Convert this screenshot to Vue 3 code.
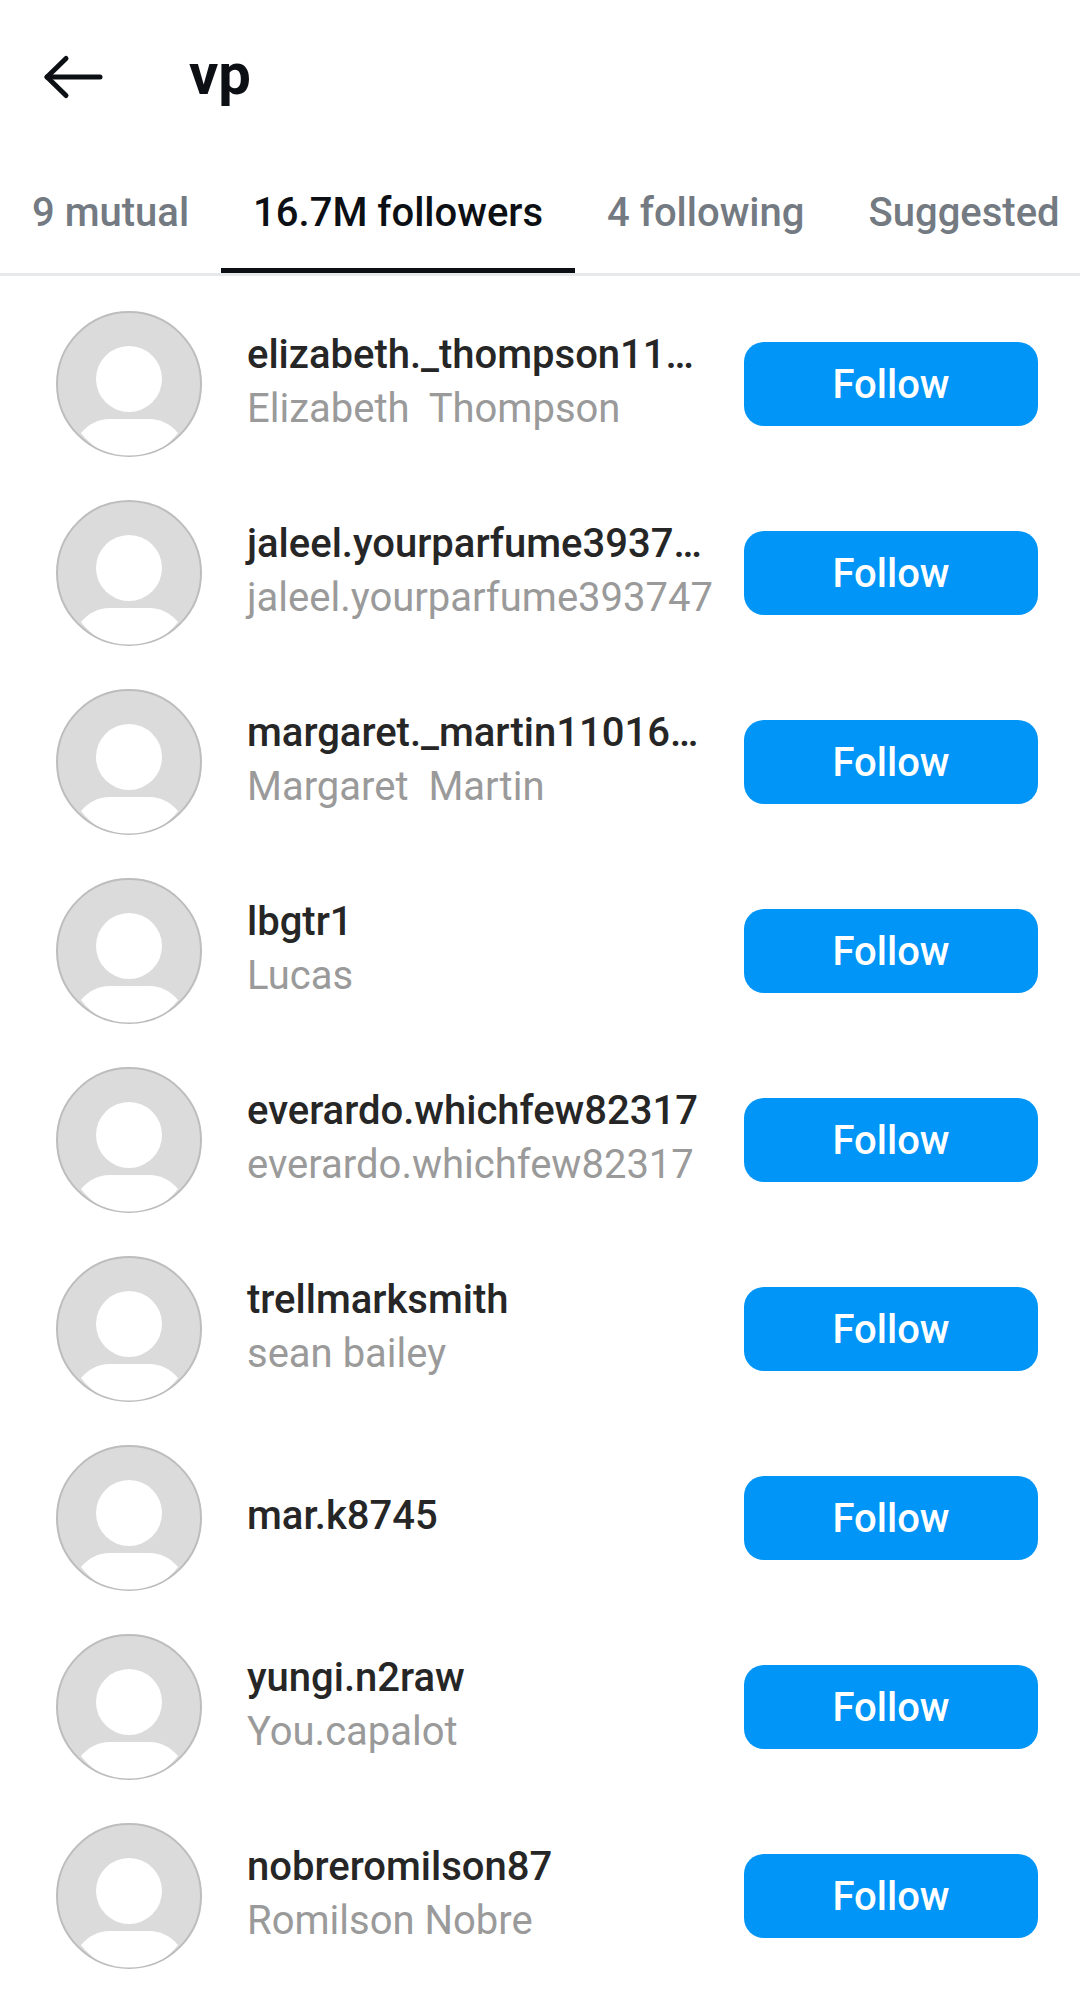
<script setup>
const tabs = [
  { label: '9 mutual' },
  { label: '16.7M followers', active: true },
  { label: '4 following' },
  { label: 'Suggested' }
]
const rows = [
  { user: 'elizabeth._thompson11…', name: 'Elizabeth  Thompson' },
  { user: 'jaleel.yourparfume3937…', name: 'jaleel.yourparfume393747' },
  { user: 'margaret._martin11016…', name: 'Margaret  Martin' },
  { user: 'lbgtr1', name: 'Lucas' },
  { user: 'everardo.whichfew82317', name: 'everardo.whichfew82317' },
  { user: 'trellmarksmith', name: 'sean bailey' },
  { user: 'mar.k8745', name: '' },
  { user: 'yungi.n2raw', name: 'You.capalot' },
  { user: 'nobreromilson87', name: 'Romilson Nobre' }
]
</script>

<template>
  <div class="page">
    <header class="top">
      <svg class="back" width="60" height="48" viewBox="0 0 60 48" fill="none" stroke="#0c1014" stroke-width="5" stroke-linecap="round" stroke-linejoin="round">
        <path d="M23 5.5 L4 24 L23 42.5" />
        <path d="M4 24 H57" />
      </svg>
      <h1 class="title">vp</h1>
    </header>
    <nav class="tabs">
      <div v-for="t in tabs" :key="t.label" class="tab" :class="{ active: t.active }">{{ t.label }}</div>
    </nav>
    <ul class="list">
      <li v-for="r in rows" :key="r.user" class="row">
        <svg class="avatar" width="146" height="146" viewBox="0 0 146 146">
          <defs>
            <clipPath id="av"><circle cx="73" cy="73" r="71.5" /></clipPath>
          </defs>
          <circle cx="73" cy="73" r="72" fill="#dbdbdb" stroke="#bdbdbd" stroke-width="2" />
          <circle cx="73" cy="68" r="33" fill="#fff" />
          <path d="M25 122 C33 113 42 108 54 108 H93 C105 108 114 113 122 122 C110 138 92 146 73 146 C54 146 37 138 25 122 Z" fill="#fff" clip-path="url(#av)" />
        </svg>
        <div class="info">
          <div class="user">{{ r.user }}</div>
          <div v-if="r.name" class="name">{{ r.name }}</div>
        </div>
        <button class="follow">Follow</button>
      </li>
    </ul>
  </div>
</template>

<style scoped>
.page {
  width: 1080px;
  height: 2005px;
  overflow: hidden;
  background: #fff;
  font-family: Roboto, "Noto Sans", sans-serif;
}
.top {
  height: 150px;
  display: flex;
  align-items: center;
  padding-left: 43px;
}
.back {
  flex: none;
  margin-top: 3px;
}
.title {
  margin: 0 0 0 86px;
  font-size: 58px;
  font-weight: 700;
  color: #0c1014;
  line-height: 1;
  position: relative;
  top: -1px;
}
.tabs {
  display: flex;
  height: 126px;
  border-bottom: 3px solid #e8e9eb;
  box-sizing: border-box;
  overflow: hidden;
}
.tab {
  flex: none;
  padding: 40px 32px 0;
  font-size: 40px;
  line-height: 46px;
  font-weight: 500;
  color: #737a82;
  white-space: nowrap;
  box-sizing: border-box;
}
.tab.active {
  color: #0c1014;
  border-bottom: 5px solid #0c1014;
}
.list {
  list-style: none;
  margin: 0;
  padding: 13px 0 0;
}
.row {
  height: 189px;
  display: flex;
  align-items: center;
  padding: 0 42px 0 56px;
  box-sizing: border-box;
}
.avatar { flex: none; }
.info {
  width: 497px;
  margin-left: 45px;
  margin-bottom: 3px;
  flex: none;
}
.user {
  font-size: 40px;
  line-height: 54px;
  font-weight: 500;
  color: #262626;
  white-space: nowrap;
}
.name {
  font-size: 40px;
  line-height: 54px;
  color: #9a9a9a;
  white-space: pre;
}
.follow {
  flex: none;
  width: 294px;
  height: 84px;
  padding: 2px 0 0;
  border: none;
  border-radius: 20px;
  background: #0095f6;
  color: #fff;
  font-family: inherit;
  font-size: 40px;
  font-weight: 500;
}
</style>

<style>
html, body { background: #fff; }
</style>
